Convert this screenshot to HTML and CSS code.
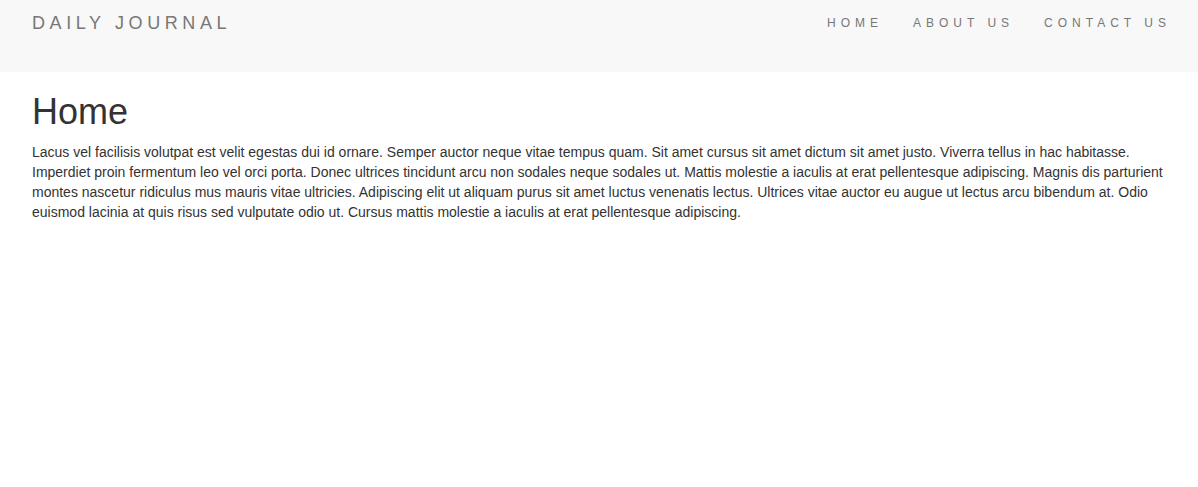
FILE: index.html
```html
<!DOCTYPE html>
<html>
<head>
<meta charset="utf-8">
<title>Daily Journal</title>
<link rel="stylesheet" href="styles.css">
</head>
<body>
<header class="navbar">
  <a class="brand" href="#">DAILY JOURNAL</a>
  <nav class="nav">
    <a href="#">HOME</a>
    <a href="#">ABOUT US</a>
    <a href="#">CONTACT US</a>
  </nav>
</header>
<main class="container">
  <h1 class="title">Home</h1>
  <p class="body-text">Lacus vel facilisis volutpat est velit egestas dui id ornare. Semper auctor neque vitae tempus quam. Sit amet cursus sit amet dictum sit amet justo. Viverra tellus in hac habitasse. Imperdiet proin fermentum leo vel orci porta. Donec ultrices tincidunt arcu non sodales neque sodales ut. Mattis molestie a iaculis at erat pellentesque adipiscing. Magnis dis parturient montes nascetur ridiculus mus mauris vitae ultricies. Adipiscing elit ut aliquam purus sit amet luctus venenatis lectus. Ultrices vitae auctor eu augue ut lectus arcu bibendum at. Odio euismod lacinia at quis risus sed vulputate odio ut. Cursus mattis molestie a iaculis at erat pellentesque adipiscing.</p>
</main>
</body>
</html>
```
FILE: styles.css
```css
* { box-sizing: border-box; }
html, body { margin: 0; padding: 0; }
body {
  font-family: "Liberation Sans", Arial, sans-serif;
  font-size: 14px;
  line-height: 20px;
  color: #333;
  background: #fff;
}
.navbar {
  display: flex;
  justify-content: space-between;
  align-items: flex-start;
  height: 72px;
  background: #f8f8f8;
  padding: 0 12px 0 32px;
}
.brand {
  display: block;
  font-size: 18px;
  line-height: 20px;
  letter-spacing: 4.6px;
  color: #777;
  text-decoration: none;
  padding-top: 13px;
}
.nav {
  display: flex;
}
.nav a {
  display: block;
  font-size: 12px;
  line-height: 20px;
  letter-spacing: 5px;
  color: #777;
  text-decoration: none;
  padding: 13px 15px;
}
.container {
  padding: 0 32px;
}
.title {
  font-size: 36px;
  font-weight: 400;
  line-height: 1.1;
  margin: 20px 0 10px;
  color: #333;
}
.body-text {
  margin: 0 0 10px;
}
```
